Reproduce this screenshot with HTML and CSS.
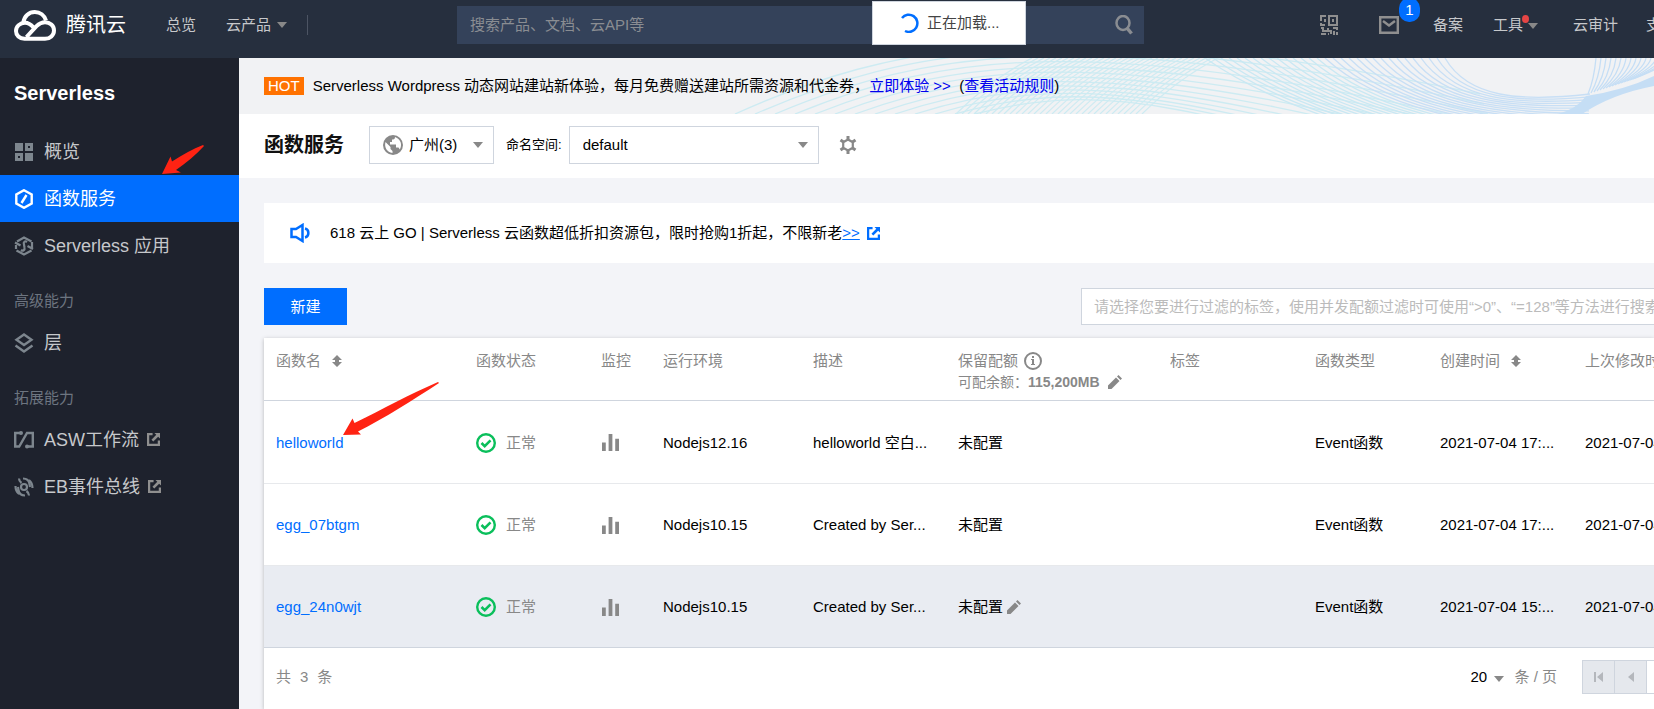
FILE: index.html
```html
<!DOCTYPE html>
<html lang="zh-CN">
<head>
<meta charset="UTF-8" />
<meta name="viewport" content="width=device-width, initial-scale=1.0"/>
<title>函数服务 - Serverless - 腾讯云</title>
<link rel="stylesheet" href="styles.css">
</head>
<body>

<!-- shared icons -->
<svg class="sprite" aria-hidden="true">
  <symbol id="i-sort" viewBox="0 0 10 12"><path d="M5 0l5 5H7v2h3l-5 5-5-5h3V5H0z" fill="currentColor"/></symbol>
  <symbol id="i-ok" viewBox="0 0 20 20"><circle cx="10" cy="10" r="8.800" fill="none" stroke="#0abf5b" stroke-width="2.400"/><path d="M5.500 10l3.200 3.200 5.800-5.800" fill="none" stroke="#0abf5b" stroke-width="2.600"/></symbol>
  <symbol id="i-bars" viewBox="0 0 18 18"><path d="M0 9h4v9H0zM7 0h4v18H7zM14 5h4v13h-4z" fill="currentColor"/></symbol>
  <symbol id="i-pen" viewBox="0 0 14 14"><path d="M0 14v-3.500L8 2.500 11.500 6l-8 8zM9 1.500L10.500 0 14 3.500 12.500 5z" fill="currentColor"/></symbol>
  <symbol id="i-ext" viewBox="0 0 14 14"><path d="M6 1.200H1.200v11.600h11.600V8" fill="none" stroke="currentColor" stroke-width="2.400"/><path d="M8 0h6v6l-2-2-5.200 5.200-2-2L10 2z" fill="currentColor"/></symbol>
</svg>

<header class="topbar">
  <a class="logo" href="#">
    <svg width="42" height="31" viewBox="0 0 42 31"><g fill="none" stroke="#fff" stroke-width="4"><path d="M32 10.500C30.500 5.500 26 2 20.800 2 14.800 2 10 6.500 9.500 12.200"/><path d="M19.500 17.500C17 14.500 14.500 12.700 11 12.700 6 12.700 2 16.400 2 20.900 2 25.400 5.500 28.800 10.500 28.800H31c5 0 9-3.600 9-8.300s-4-8.300-9-8.300c-3.500 0-6 1.500-8.500 4L12.500 27"/></g></svg>
    <span>腾讯云</span>
  </a>
  <nav class="topnav">
    <a href="#">总览</a>
    <a href="#">云产品<i class="caret"></i></a>
  </nav>
  <form class="search">
    <input type="text" aria-label="搜索" placeholder="搜索产品、文档、云API等">
    <button type="button" aria-label="搜索"><svg width="18" height="20" viewBox="0 0 18 20"><ellipse cx="8" cy="8" rx="6.500" ry="7" fill="none" stroke="#8a8d92" stroke-width="2.500"/><path d="M12 13l4.500 5.500" stroke="#8a8d92" stroke-width="3.500"/></svg></button>
  </form>
  <nav class="tools">
    <a href="#" class="qr" aria-label="二维码"><svg width="18" height="20" viewBox="0 0 18 20"><g fill="none" stroke="#8f8f8f" stroke-width="2"><path d="M6 1H1v5M1 8v2h4M9 1h8v9H9zM1 13h2v3h4M1 19h5M8 13v3h3v3M8 19h1M13 13h4v2M17 17v3M14 16v4"/></g><path d="M12 4h2v3h-2zM4 4h2v3H4z" fill="#8f8f8f"/></svg></a>
    <a href="#" class="mail" aria-label="消息"><svg width="20" height="18" viewBox="0 0 20 18"><path d="M1.200 1.200h17.600v15.600H1.200zM4 5l6 4.500L16 5" fill="none" stroke="#8f8f8f" stroke-width="2.400"/></svg><span class="badge">1</span></a>
    <a href="#">备案</a>
    <a href="#" class="toolkit">工具<i class="caret"></i><i class="dot"></i></a>
    <a href="#">云审计</a>
    <a href="#">支持</a>
  </nav>
</header>

<div class="loading" role="status">
  <svg width="20" height="20" viewBox="0 0 20 20"><path d="M3 5A8.600 8.600 0 1 1 6 18" fill="none" stroke="#006eff" stroke-width="2.500"/></svg>
  <span>正在加载...</span>
</div>

<div class="layout">
  <aside class="sidebar">
    <h2>Serverless</h2>
    <a href="#"><svg width="20" height="20" viewBox="0 0 20 20"><path d="M1 1h8v8H1zM11 11h8v8h-8z" fill="#7d868e"/><path d="M12.500 2.500h5v5h-5zM2.500 12.500h5v5h-5z" fill="none" stroke="#7d868e" stroke-width="3"/></svg>概览</a>
    <a href="#" class="active"><svg width="20" height="20" viewBox="0 0 20 20"><path d="M10 1.200l7.700 4.300v9L10 18.800l-7.700-4.300v-9z" fill="none" stroke="#fff" stroke-width="2.400"/><path d="M12.500 6l-5 8" stroke="#fff" stroke-width="2.400"/></svg>函数服务</a>
    <a href="#"><svg width="20" height="20" viewBox="0 0 20 20"><g fill="none" stroke="#7d868e" stroke-width="2.200"><path d="M3 5.500l7-4 7.500 4M2.500 14.500l7.500 4 7.500-4M18 6v6"/><path d="M1 6.500l5.500 3M2 9v4M19 13l-5.500-3"/><path d="M13 6c-2-1.500-4 0-3 2.500l.500 3C11 14 9 15.500 7 14"/></g></svg>Serverless 应用</a>
    <h3>高级能力</h3>
    <a href="#"><svg width="20" height="20" viewBox="0 0 20 20"><path d="M10 1.500l7.500 5.300L10 12 2.500 6.800zM1.500 12.500l8.500 6 8.500-6" fill="none" stroke="#7d868e" stroke-width="2.400"/></svg>层</a>
    <h3>拓展能力</h3>
    <a href="#"><svg width="20" height="20" viewBox="0 0 20 20"><g fill="none" stroke="#7d868e" stroke-width="2.400"><path d="M7 3H1.200v13.500h4L13 3h5.800v13.500H12"/></g><circle cx="7" cy="3" r="2" fill="#7d868e"/><circle cx="13" cy="16.500" r="2" fill="#7d868e"/></svg>ASW工作流<svg class="ext" width="13" height="13"><use href="#i-ext"/></svg></a>
    <a href="#"><svg width="20" height="20" viewBox="0 0 20 20"><g fill="none" stroke="#7d868e" stroke-width="2.200"><circle cx="10" cy="10" r="3"/><path d="M5 1.500c0 2 .500 3 2.500 4.500M15 18.500c0-2-.500-3-2.500-4.500M9 1.500c4 0 6 2 6.500 5.500l.500 3M11 18.500c-4 0-6-2-6.500-5.500L4 10M1.500 9c0 4 1 6 3.500 8M18.500 11c0-4-1-6-3.500-8"/></g></svg>EB事件总线<svg class="ext" width="13" height="13"><use href="#i-ext"/></svg></a>
  </aside>

  <main>
    <div class="banner">
      <svg id="waves" width="934" height="56" viewBox="0 0 934 56" aria-hidden="true"></svg>
      <span class="hot">HOT</span>
      <p>Serverless Wordpress 动态网站建站新体验，每月免费赠送建站所需资源和代金券，<a href="#">立即体验 &gt;&gt;</a>&nbsp; (<a href="#">查看活动规则</a>)</p>
    </div>

    <div class="titlebar">
      <h1>函数服务</h1>
      <button type="button" class="region">
        <svg width="20" height="20" viewBox="0 0 20 20"><circle cx="10" cy="10" r="10" fill="#888"/><path d="M2.500 7l5 5v2l2 2v2C4 17.500 1 12 2.500 7zM12 2c0 2-1 2.500-3 2.500V7H7v2.500h6v3h2.500l1.300 2C19.500 10 18 4 12 2z" fill="#fff"/></svg>
        <span>广州(3)</span><i class="caret"></i>
      </button>
      <label for="ns">命名空间:</label>
      <div class="select">
        <select id="ns"><option>default</option></select><i class="caret"></i>
      </div>
      <button type="button" class="gear" aria-label="设置"><svg width="18" height="20" viewBox="0 0 18 20"><path d="M9 4.500l4.800 2.700v5.600L9 15.500l-4.800-2.700V7.200z" fill="none" stroke="#888" stroke-width="2.200"/><path d="M9 1v3M9 16v3M1.500 5l3 2M13.500 13l3 2M1.500 15l3-2M13.500 7l3-2" stroke="#888" stroke-width="3"/></svg></button>
    </div>

    <div class="content">
      <div class="notice">
        <svg width="20" height="20" viewBox="0 0 20 20"><path d="M1.500 6h4.500L12.500 2v16L6 14H1.500z" fill="none" stroke="#006eff" stroke-width="2.500"/><path d="M15 5.500c4.500 1 4.500 8 0 9" fill="none" stroke="#006eff" stroke-width="2.500"/></svg>
        <p>618 云上 GO | Serverless 云函数超低折扣资源包，限时抢购1折起，不限新老<a href="#">&gt;&gt;</a></p>
        <svg class="ext" width="13" height="13"><use href="#i-ext"/></svg>
      </div>

      <div class="actions">
        <button type="button" class="primary">新建</button>
        <input type="text" aria-label="标签过滤" placeholder="请选择您要进行过滤的标签，使用并发配额过滤时可使用“&gt;0”、“=128”等方法进行搜索">
      </div>

      <div class="panel">
        <table>
          <colgroup>
            <col class="c-name"><col class="c-type"><col class="c-mon"><col class="c-env"><col class="c-std"><col class="c-quota"><col class="c-std"><col class="c-type"><col class="c-std"><col>
          </colgroup>
          <thead>
            <tr>
              <th>函数名<svg class="sort" width="10" height="12"><use href="#i-sort"/></svg></th>
              <th>函数状态</th>
              <th>监控</th>
              <th>运行环境</th>
              <th>描述</th>
              <th>保留配额<svg class="info" width="18" height="18" viewBox="0 0 18 18"><circle cx="9" cy="9" r="8" fill="none" stroke="#888" stroke-width="2"/><path d="M8 4h2v2H8zM7 7h3v5h1v1H7v-1h1V8H7z" fill="#888"/></svg>
                <div class="quota">可配余额：<b>115,200MB</b><svg class="pen" width="14" height="14"><use href="#i-pen"/></svg></div></th>
              <th>标签</th>
              <th>函数类型</th>
              <th>创建时间<svg class="sort" width="10" height="12"><use href="#i-sort"/></svg></th>
              <th>上次修改时间</th>
            </tr>
          </thead>
          <tbody>
            <tr>
              <td><a href="#">helloworld</a></td>
              <td><span class="state"><svg width="20" height="20"><use href="#i-ok"/></svg>正常</span></td>
              <td><svg class="bars" width="17" height="17"><use href="#i-bars"/></svg></td>
              <td>Nodejs12.16</td>
              <td>helloworld 空白...</td>
              <td>未配置</td>
              <td></td>
              <td>Event函数</td>
              <td>2021-07-04 17:...</td>
              <td>2021-07-04 17:...</td>
            </tr>
            <tr>
              <td><a href="#">egg_07btgm</a></td>
              <td><span class="state"><svg width="20" height="20"><use href="#i-ok"/></svg>正常</span></td>
              <td><svg class="bars" width="17" height="17"><use href="#i-bars"/></svg></td>
              <td>Nodejs10.15</td>
              <td>Created by Ser...</td>
              <td>未配置</td>
              <td></td>
              <td>Event函数</td>
              <td>2021-07-04 17:...</td>
              <td>2021-07-04 17:...</td>
            </tr>
            <tr class="hover">
              <td><a href="#">egg_24n0wjt</a></td>
              <td><span class="state"><svg width="20" height="20"><use href="#i-ok"/></svg>正常</span></td>
              <td><svg class="bars" width="17" height="17"><use href="#i-bars"/></svg></td>
              <td>Nodejs10.15</td>
              <td>Created by Ser...</td>
              <td>未配置<svg class="pen near" width="14" height="14"><use href="#i-pen"/></svg></td>
              <td></td>
              <td>Event函数</td>
              <td>2021-07-04 15:...</td>
              <td>2021-07-04 15:...</td>
            </tr>
          </tbody>
        </table>

        <div class="footer">
          <div class="total"><span>共</span><span>3</span><span>条</span></div>
          <div class="size">
            <select aria-label="每页条数"><option>20</option></select><i class="caret"></i>
            <span>条 / 页</span>
          </div>
          <div class="pager">
            <button type="button" disabled aria-label="首页"><svg width="10" height="10" viewBox="0 0 10 10"><path d="M0 0h2v10H0zM9 0v10L3 5z" fill="#b4b7bc"/></svg></button>
            <button type="button" disabled aria-label="上一页"><svg width="10" height="10" viewBox="0 0 10 10"><path d="M8 0v10L2 5z" fill="#b4b7bc"/></svg></button>
            <input type="text" aria-label="页码">
          </div>
        </div>
      </div>
    </div>
  </main>
</div>

<!-- pointer arrows over the page -->
<svg class="arrow arrow-menu" width="43" height="30" viewBox="0 0 43 30"><path d="M0 29L8.500 11.500 10 16.500C20 10 31 4 41 0l1 1C34 10 24 18 14 25l5 2.500z" fill="#ff2313"/></svg>
<svg class="arrow arrow-row" width="96" height="54" viewBox="0 0 96 54"><path d="M0 53L9.500 36.500 11.500 41C40 27 67 12 95 0l1 1C70 18 42 36 15 49.500l3 3z" fill="#ff2313"/></svg>

<script src="script.js"></script>
</body>
</html>
```
FILE: styles.css
```css
:root {
  --blue: #006eff;
  --bar: #262f3e;
  --side: #1e222d;
  --line: #cfd5de;
  --grey: #888;
}
* { margin:0; padding:0; box-sizing:border-box; }
body {
  font:15px/20px 'Liberation Sans', 'Noto Sans CJK SC', sans-serif;
  color:#000; background:#f3f4f8;
  overflow-x:hidden;
  min-height:100vh; display:flex; flex-direction:column;
}
a { text-decoration:none; }
button, input, select { font:inherit; border:0; border-radius:0; background:none; outline:0; }
button { cursor:pointer; }
select { appearance:none; color:inherit; }
svg { flex:none; }
.sprite { display:none; }
.caret {
  display:inline-block; flex:none; width:0; height:0;
  border:5px solid transparent; border-top:6px solid var(--grey); border-bottom:0;
}

/* top bar */
.topbar {
  height:58px; padding-bottom:8px; background:var(--bar);
  display:flex; align-items:center; overflow:hidden;
}
.topbar a { color:#c6c8cb; white-space:nowrap; }
.topbar .logo {
  display:flex; align-items:center; gap:10px; margin-left:14px;
  font-size:20px; color:#fff;
}
.topnav {
  display:flex; gap:30px; margin-left:40px; padding-right:20px;
  border-right:1px solid #4c5463;
}
.topnav .caret { margin-left:6px; vertical-align:2px; }
.search {
  flex:1; display:flex; align-items:center; height:38px;
  margin:0 176px 0 149px; padding:0 11px 0 13px; background:#34425a;
}
.search input { flex:1; min-width:0; color:#ccc; }
.search input::placeholder { color:#8a8d92; }
.search button { display:flex; }
.tools { flex:none; width:334px; height:50px; display:flex; align-items:center; }
.tools a { flex:none; }
.tools svg { display:block; }
.qr { margin-right:41px; }
.mail { position:relative; margin-right:34px; }
.badge {
  position:absolute; left:20px; top:-18px; width:21px; height:24px;
  border-radius:10px; background:var(--blue); color:#fff; text-align:center; line-height:24px;
}
.toolkit { position:relative; margin:0 35px 0 30px; }
.toolkit .caret { margin-left:5px; vertical-align:1px; }
.dot {
  position:absolute; left:29px; top:0; width:7px; height:8px;
  border-radius:50%; background:#e54545;
}
.tools a:last-child { margin-left:28px; }

.loading {
  position:fixed; top:1px; left:calc(50% + 45px); z-index:5;
  width:154px; height:44px; padding-left:26px;
  display:flex; align-items:center; gap:8px;
  background:#fff; border:1px solid var(--line); color:#444;
}

.layout { flex:1; display:flex; }

/* sidebar */
.sidebar { flex:none; width:239px; background:var(--side); }
.sidebar h2 { padding:22px 14px; font-size:20px; line-height:26px; color:#fff; }
.sidebar h3 { padding:18px 14px 4px; font-weight:normal; font-size:15px; line-height:28px; color:#6d7580; }
.sidebar a {
  display:flex; align-items:center; height:47px; padding-left:14px;
  font-size:18px; color:#c6c8cb;
}
.sidebar a > svg:first-child { margin-right:10px; }
.sidebar .active { background:var(--blue); color:#fff; }
.sidebar .ext { margin-left:8px; color:#8f8f8f; }

main { flex:1; min-width:0; display:flex; flex-direction:column; }

.banner {
  position:relative; height:56px; padding-left:25px; overflow:hidden;
  display:flex; align-items:center; background:#f1f2f4; white-space:nowrap;
}
#waves { position:absolute; right:0; top:0; }
.hot { height:18px; line-height:18px; padding:0 4px; margin-right:9px; background:#ff7200; color:#fff; }
.banner p { position:relative; }
.banner a { color:#0000ee; }

.titlebar {
  height:64px; padding:0 0 2px 25px;
  display:flex; align-items:center; background:#fff;
}
h1 { font-size:20px; line-height:26px; color:#111; }
.region {
  width:125px; height:38px; margin:0 12px 0 25px; padding:0 10px 0 13px;
  border:1px solid var(--line); display:flex; align-items:center; gap:6px;
}
.region .caret { margin-left:auto; }
.titlebar label { font-size:13px; }
.select {
  width:250px; height:38px; margin:0 20px 0 7px; padding:0 10px 0 13px;
  border:1px solid var(--line); display:flex; align-items:center;
}
.select select { flex:1; height:36px; }
.gear { display:flex; }

.content { flex:1; padding:25px 0 0 25px; display:flex; flex-direction:column; }
.notice {
  display:flex; align-items:center; height:60px; padding-left:26px;
  background:#fff; white-space:nowrap;
}
.notice p { margin-left:20px; }
.notice a { color:var(--blue); text-decoration:underline; }
.notice .ext { margin-left:7px; color:var(--blue); }

.actions { display:flex; justify-content:space-between; margin:25px 0 13px; }
.primary { width:83px; height:37px; background:var(--blue); color:#fff; }
.actions input {
  width:573px; height:37px; padding-left:12px;
  background:#fff; border:1px solid var(--line); border-right:0;
}
.actions input::placeholder { color:#bbb; }

/* function list */
.panel { flex:1; background:#fff; box-shadow:0 1px 4px rgba(0,0,0,.25); }
table { width:100%; table-layout:fixed; border-collapse:collapse; }
.c-name { width:200px; }
.c-type { width:125px; }
.c-mon { width:62px; }
.c-env { width:150px; }
.c-std { width:145px; }
.c-quota { width:212px; }
th, td { padding:0 0 0 12px; text-align:left; white-space:nowrap; }
th {
  height:62px; padding-top:13px; vertical-align:top;
  font-weight:normal; color:var(--grey); border-bottom:1px solid var(--line);
}
th svg { vertical-align:middle; }
.sort { margin:-2px 0 0 11px; }
.info { margin:-2px 0 0 6px; }
.quota { font-size:14px; line-height:22px; }
.quota b { font-size:14px; }
.pen { margin:-2px 0 0 8px; color:var(--grey); vertical-align:middle; }
.pen.near { margin-left:4px; }
td { height:82px; padding-top:2px; border-bottom:1px solid #e7e9ec; }
tr:first-child td { height:83px; }
td a { color:var(--blue); }
tr:last-child td { border-bottom-color:var(--line); }
.hover { background:#e9ecf2; }
.state { display:flex; align-items:center; gap:10px; color:var(--grey); }
.bars { display:block; margin-left:1px; color:var(--grey); }

.footer { display:flex; align-items:center; height:58px; padding-left:12px; color:var(--grey); }
.total { display:flex; gap:9px; }
.size { display:flex; align-items:center; margin:0 25px 0 auto; }
.size select { width:17px; color:#000; }
.size .caret { margin:4px 10px 0 7px; }
.pager { width:72px; height:34px; display:flex; overflow:hidden; border:1px solid var(--line); border-right:0; }
.pager button {
  flex:none; width:32px; display:flex; align-items:center; justify-content:center;
  background:#e5e8ed; border-right:1px solid var(--line);
}
.pager input { flex:none; width:60px; }

.arrow { position:absolute; pointer-events:none; }
.arrow-menu { left:162px; top:145px; }
.arrow-row { left:343px; top:382px; }
```
FILE: script.js
```js
// line art behind the banner text
const waves = document.getElementById('waves');
let art = '';
function line(d, color){
  art += `<path d="${d}" fill="none" stroke="${color}" stroke-width="1.3"/>`;
}
// long arcs, left to middle
for (let i=0; i<13; i++) {
  line(`M${15+i*20} 56C${170+i*18} ${-14+i*3} ${340+i*12} ${-50+i*8} ${760+i*4} ${36+i*10}`, '#cdebf2');
}
// rising hatch
for (let i=0; i<32; i++) {
  line(`M${236+i*6} 56Q${270+i*6} 22 ${312+i*6} 0`, '#cdebf2');
}
// falling hatch that bends to the right
for (let i=0; i<=30; i++) {
  const t = i/30;
  line(`M${485+240*t} 0C${570+178*t} ${60-20*t} ${700+100*t} ${90-46*t} ${865+5*t} ${120-84*t}`, t<.5 ? '#c9e8f3' : '#c8dff5');
}
// fan on the right edge
for (let i=0; i<16; i++) {
  line(`M${876+i*5} 0Q${874+i*5} ${22-i} ${868+i*3} ${36-i}`, '#c5def5');
}
art += '<path d="M866 38Q905 32 934 18V28Q892 36 862 56H838Q858 50 866 38z" fill="#c5def5"/>';
waves.innerHTML = art;
```
